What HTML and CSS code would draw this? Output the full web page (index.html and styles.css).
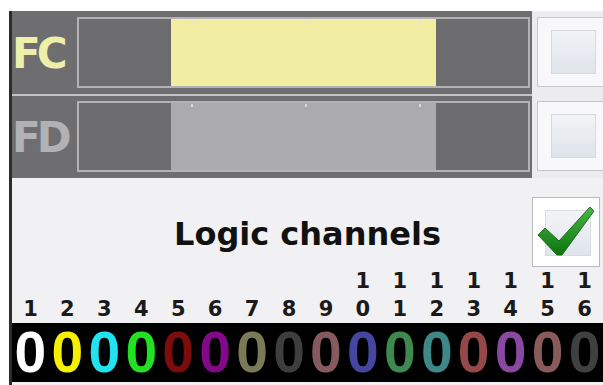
FILE: index.html
```html
<!DOCTYPE html>
<html lang="en">
<head>
    <meta charset="UTF-8">
    <meta name="viewport" content="width=device-width, initial-scale=1.0">
    <title>Logic channels</title>
    <link rel="stylesheet" href="styles.css">
</head>
<body>
    <div class="frame">
        <!-- FC / FD faders -->
        <div class="row">
            <div class="track">
                <span class="tag tag-fc">FC</span>
                <div class="bar">
                    <div class="seg seg-off"></div>
                    <div class="seg seg-fc"></div>
                    <div class="seg seg-off"></div>
                </div>
            </div>
            <div class="toggle"><div class="box"><div class="box-inner"></div></div></div>
        </div>
        <div class="row row-fd">
            <div class="track">
                <span class="tag tag-fd">FD</span>
                <div class="bar">
                    <div class="seg seg-off"></div>
                    <div class="seg seg-fd"></div>
                    <div class="seg seg-off"></div>
                </div>
            </div>
            <div class="toggle"><div class="box"><div class="box-inner"></div></div></div>
        </div>

        <!-- logic channels -->
        <div class="logic">
            <div class="logic-head">
                <span></span>
                <h2>Logic channels</h2>
                <div class="check">
                    <svg width="66" height="68" viewBox="0 0 66 68">
                        <defs>
                            <linearGradient id="sq" x1="0" y1="0" x2="0" y2="1">
                                <stop offset="0" stop-color="#f3f4f7"/>
                                <stop offset="1" stop-color="#dfe4ec"/>
                            </linearGradient>
                            <linearGradient id="gr" x1="0" y1="0" x2="0" y2="1">
                                <stop offset="0" stop-color="#46b846"/>
                                <stop offset="1" stop-color="#0e730e"/>
                            </linearGradient>
                        </defs>
                        <rect x="12.5" y="12.5" width="45" height="45" fill="url(#sq)" stroke="#dadbe0"/>
                        <path d="M5 37 L12 30 L26 43 L57 9 L61 13 L29 57 L24 57 Z" fill="url(#gr)" stroke="#1b6d1b" stroke-width="1" stroke-linejoin="round"/>
                    </svg>
                </div>
            </div>

            <div class="nums">
                <b></b><b></b><b></b><b></b><b></b><b></b><b></b><b></b><b></b>
                <b>1</b><b>1</b><b>1</b><b>1</b><b>1</b><b>1</b><b>1</b>
                <b>1</b><b>2</b><b>3</b><b>4</b><b>5</b><b>6</b><b>7</b><b>8</b><b>9</b>
                <b>0</b><b>1</b><b>2</b><b>3</b><b>4</b><b>5</b><b>6</b>
            </div>

            <div class="zeros">
                <span class="z1">0</span>
                <span class="z2">0</span>
                <span class="z3">0</span>
                <span class="z4">0</span>
                <span class="z5">0</span>
                <span class="z6">0</span>
                <span class="z7">0</span>
                <span class="z8">0</span>
                <span class="z9">0</span>
                <span class="z10">0</span>
                <span class="z11">0</span>
                <span class="z12">0</span>
                <span class="z13">0</span>
                <span class="z14">0</span>
                <span class="z15">0</span>
                <span class="z16">0</span>
            </div>
        </div>
    </div>
</body>
</html>
```

FILE: styles.css
```css
body {
    margin: 0;
    padding: 0;
    background-color: #ffffff;
    font-family: "DejaVu Sans", Verdana, sans-serif;
    overflow: hidden;
}

.frame {
    margin: 11px 0 0 9px;
    width: 591px;
    height: 374px;
    border-left: 3px solid #2c2c2e;
    background-color: #f1f1f3;
}

/* fader rows */
.row {
    display: flex;
    height: 83px;
}

.row-fd {
    height: 84px;
}

.track {
    width: 520px;
    box-sizing: border-box;
    display: flex;
    align-items: flex-start;
    padding-top: 6px;
    background-color: #6e6e71;
}

.row-fd .track {
    border-top: 2px solid #c4c4c8;
    padding-top: 5px;
}

.tag {
    width: 65px;
    height: 71px;
    display: flex;
    align-items: center;
    font-size: 42px;
    font-weight: bold;
    letter-spacing: -4px;
    margin-top: 1px;
}

.tag-fc {
    color: #eef0aa;
}

.tag-fd {
    color: #b2b2b4;
}

.bar {
    width: 453px;
    height: 71px;
    box-sizing: border-box;
    border: 2px solid #b3b3b6;
    display: flex;
}

.seg-off {
    width: 92px;
    background-color: #6c6c6f;
}

.seg-fc {
    flex: 1;
    background: linear-gradient(#e4e4dc, #e4e4dc) 20px 1px / 2px 3px no-repeat,
                linear-gradient(#e4e4dc, #e4e4dc) 134px 1px / 2px 3px no-repeat,
                linear-gradient(#e4e4dc, #e4e4dc) 248px 1px / 2px 3px no-repeat,
                #f1eea3;
}

.seg-fd {
    flex: 1;
    background: linear-gradient(#dcdcde, #dcdcde) 20px 1px / 2px 3px no-repeat,
                linear-gradient(#dcdcde, #dcdcde) 134px 1px / 2px 3px no-repeat,
                linear-gradient(#dcdcde, #dcdcde) 248px 1px / 2px 3px no-repeat,
                #ababad;
}

.toggle {
    width: 71px;
    box-sizing: border-box;
    padding: 6px 0 0 5px;
    background-color: #ececf0;
}

.row-fd .toggle {
    padding-top: 7px;
}

.box {
    width: 70px;
    height: 70px;
    box-sizing: border-box;
    border: 1px solid #c6c6ca;
    background-color: #f8f8fa;
    padding: 12px 0 0 13px;
}

.box-inner {
    width: 45px;
    height: 44px;
    box-sizing: border-box;
    border: 1px solid #d8d9de;
    background: linear-gradient(#f2f3f6, #dfe4eb);
}

/* logic channels */
.logic-head {
    display: grid;
    grid-template-columns: 1fr auto 1fr;
    align-items: center;
    margin-top: 19px;
}

.logic-head h2 {
    margin: 4px 0 0 0;
    font-size: 32px;
    line-height: 32px;
    font-weight: bold;
    color: #111111;
}

.check {
    justify-self: end;
    margin-right: 3px;
    width: 68px;
    height: 70px;
    box-sizing: border-box;
    border: 1px solid #b9babe;
    background-color: #ffffff;
}

.check svg {
    display: block;
}

.nums {
    display: grid;
    grid-template-columns: repeat(16, 1fr);
    font-size: 21px;
    line-height: 28px;
    height: 56px;
    color: #1a1a1a;
    text-align: center;
}

.zeros {
    display: grid;
    grid-template-columns: repeat(16, 1fr);
    height: 59px;
    background-color: #000000;
    font-family: "Liberation Sans", Arial, sans-serif;
    font-weight: bold;
    font-size: 57px;
    line-height: 59px;
    text-align: center;
}

.z1 { color: #ffffff; }
.z2 { color: #f4f000; }
.z3 { color: #22e2f0; }
.z4 { color: #22e022; }
.z5 { color: #7e0c0c; }
.z6 { color: #82098a; }
.z7 { color: #7c7a56; }
.z8 { color: #3e3e3e; }
.z9 { color: #855a5e; }
.z10 { color: #4646a0; }
.z11 { color: #3e8a4e; }
.z12 { color: #3e8888; }
.z13 { color: #944848; }
.z14 { color: #8a48a0; }
.z15 { color: #885a5a; }
.z16 { color: #404040; }
```
